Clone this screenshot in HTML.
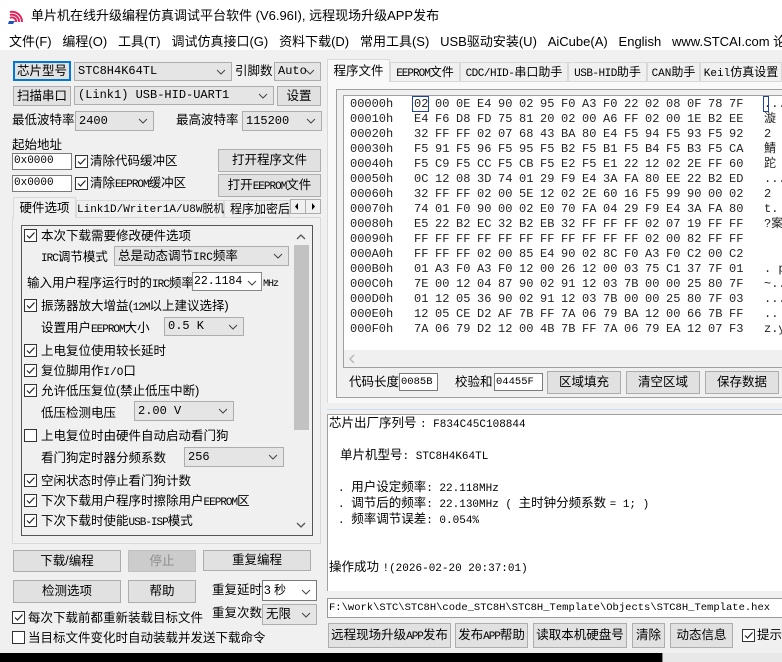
<!DOCTYPE html>
<html><head><meta charset="utf-8">
<style>
*{box-sizing:border-box;margin:0;padding:0}
body{width:782px;height:662px;overflow:hidden;background:#f0f0f0;position:relative;font-family:"Liberation Sans","Noto Sans CJK SC",sans-serif;font-size:12px;line-height:15px;color:#000}
.a{position:absolute;white-space:nowrap;line-height:15px}
.btn{position:absolute;background:#e1e1e1;border:1px solid #adadad;text-align:center;font-size:12.5px;white-space:nowrap}
.sel{position:absolute;background:#e5e5e5;border:1px solid #adadad;font-family:"Liberation Mono","Noto Sans CJK SC",monospace;font-size:12px;padding-left:3px;white-space:nowrap}
.sel svg{position:absolute;right:5px;top:50%;margin-top:-3px}
.inp{position:absolute;background:#fff;border:1px solid #7a7a7a;font-family:"Liberation Mono",monospace;font-size:11px;padding-left:1px;white-space:nowrap}
.cb{position:absolute;width:13px;height:13px;background:#fff;border:1px solid #333}
.m{font-family:"Liberation Mono","Noto Sans CJK SC",monospace}
.row{position:absolute;left:350px;font-family:"Liberation Mono","Noto Sans CJK SC",monospace;font-size:12px;line-height:15px;color:#222;white-space:nowrap}
.row span{position:absolute;top:0}
.tab{position:absolute;border:1px solid #d9d9d9;border-bottom:none;background:#f0f0f0;text-align:center;font-size:12px;white-space:nowrap}
</style></head><body>
<div class="a" style="left:0;top:0;width:782px;height:32px;background:#fff"></div>
<svg class="a" style="left:8px;top:8px" width="18" height="16" viewBox="0 0 18 16"><path d="M2 4 A10 10 0 0 1 14 14 M2 7 A7 7 0 0 1 11 14 M2 10 A4 4 0 0 1 8 14" stroke="#e0245e" stroke-width="2" fill="none"/><path d="M1 13 L7 13 L5 16 L0 16Z" fill="#2050c0"/></svg>
<div class="a" style="left:31px;top:8px;font-size:13px">单片机在线升级编程仿真调试平台软件 (V6.96I), 远程现场升级APP发布</div>
<div class="a" style="left:0;top:32px;width:782px;height:18px;background:#fff"></div>
<div class="a" style="left:9px;top:34px;font-size:13px">文件(F)&nbsp;&nbsp;&nbsp;编程(O)&nbsp;&nbsp;&nbsp;工具(T)&nbsp;&nbsp;&nbsp;调试仿真接口(G)&nbsp;&nbsp;&nbsp;资料下载(D)&nbsp;&nbsp;&nbsp;常用工具(S)&nbsp;&nbsp;&nbsp;USB驱动安装(U)&nbsp;&nbsp;&nbsp;AiCube(A)&nbsp;&nbsp;&nbsp;English&nbsp;&nbsp;&nbsp;www.STCAI.com 论坛</div>

<div class="btn" style="left:13px;top:61px;width:58px;height:20px;border:2px solid #0078d7;line-height:16px">芯片型号</div>
<div class="sel" style="left:74px;top:62px;width:158px;height:19px;line-height:17px">STC8H4K64TL<svg width="10" height="6"><path d="M1 1L5 5L9 1" stroke="#444" fill="none"/></svg></div>
<div class="a" style="left:235px;top:64px;font-size:12.5px">引脚数</div>
<div class="sel" style="left:274px;top:62px;width:47px;height:19px;line-height:17px">Auto<svg width="10" height="6"><path d="M1 1L5 5L9 1" stroke="#444" fill="none"/></svg></div>
<div class="btn" style="left:13px;top:86px;width:58px;height:20px;line-height:18px">扫描串口</div>
<div class="sel" style="left:74px;top:86px;width:200px;height:19px;line-height:17px">(Link1) USB-HID-UART1<svg width="10" height="6"><path d="M1 1L5 5L9 1" stroke="#444" fill="none"/></svg></div>
<div class="btn" style="left:277px;top:86px;width:44px;height:20px;line-height:18px">设置</div>
<div class="a" style="left:12px;top:113px;font-size:12.5px">最低波特率</div>
<div class="sel" style="left:75px;top:111px;width:79px;height:20px;line-height:18px">2400<svg width="10" height="6"><path d="M1 1L5 5L9 1" stroke="#444" fill="none"/></svg></div>
<div class="a" style="left:176px;top:113px;font-size:12.5px">最高波特率</div>
<div class="sel" style="left:242px;top:111px;width:80px;height:20px;line-height:18px">115200<svg width="10" height="6"><path d="M1 1L5 5L9 1" stroke="#444" fill="none"/></svg></div>
<div class="a" style="left:12px;top:138px;font-size:12.5px">起始地址</div>
<div class="inp" style="left:12px;top:153px;width:60px;height:17px;line-height:15px">0x0000</div>
<div class="cb" style="left:75px;top:155px"><svg width="11" height="11" style="position:absolute;left:0;top:0"><path d="M2 5.5L4.5 8L9.5 2.5" stroke="#222" stroke-width="1.2" fill="none"/></svg></div>
<div class="a" style="left:90px;top:154px;font-size:12.5px">清除代码缓冲区</div>
<div class="btn" style="left:218px;top:149px;width:103px;height:23px;line-height:21px">打开程序文件</div>
<div class="inp" style="left:12px;top:175px;width:60px;height:17px;line-height:15px">0x0000</div>
<div class="cb" style="left:75px;top:177px"><svg width="11" height="11" style="position:absolute;left:0;top:0"><path d="M2 5.5L4.5 8L9.5 2.5" stroke="#222" stroke-width="1.2" fill="none"/></svg></div>
<div class="a" style="left:90px;top:176px;font-size:12.5px">清除<span class="m" style="font-size:11px;letter-spacing:-1px">EEPROM</span>缓冲区</div>
<div class="btn" style="left:218px;top:174px;width:103px;height:23px;line-height:21px">打开<span class="m" style="font-size:11px;letter-spacing:-1px">EEPROM</span>文件</div>
<div class="a" style="left:12px;top:217px;width:309px;height:327px;border:1px solid #d9d9d9;background:#f0f0f0"></div>
<div class="tab" style="left:13px;top:197px;width:63px;height:21px;line-height:20px;font-size:12.5px">硬件选项</div>
<div class="tab" style="left:76px;top:200px;width:148px;height:17px;line-height:16px;font-size:11px"><span class="m">Link1D/Writer1A/U8W</span>脱机</div>
<div class="tab" style="left:224px;top:200px;width:66px;height:17px;line-height:16px;overflow:hidden;text-align:left;padding-left:5px">程序加密后</div>
<div class="a" style="left:290px;top:199px;width:31px;height:15px;border:1px solid #adadad;background:#f0f0f0"><svg width="29" height="13" style="position:absolute;left:0;top:0"><path d="M7 3L4 6.5L7 10Z M21 3L24 6.5L21 10Z" fill="#000"/><path d="M14.5 0V13" stroke="#adadad"/></svg></div>
<div class="a" style="left:21px;top:225px;width:292px;height:311px;border:1px solid #555;background:#f0f0f0"></div>
<div class="a" style="left:294px;top:245px;width:15px;height:185px;background:#c2c2c2"></div>
<svg class="a" style="left:296px;top:234px" width="10" height="6"><path d="M1 5L5 1L9 5" stroke="#555" stroke-width="1.3" fill="none"/></svg>
<svg class="a" style="left:296px;top:522px" width="10" height="6"><path d="M1 1L5 5L9 1" stroke="#555" stroke-width="1.3" fill="none"/></svg>

<div id="hw"></div>
<div class="a" style="left:41px;top:229px;font-size:12.5px">本次下载需要修改硬件选项</div>
<div class="a" style="left:41px;top:250px;font-size:12.5px"><span class="m" style="font-size:11px;letter-spacing:-1px">IRC</span>调节模式</div>
<div class="sel" style="left:114px;top:246px;width:175px;height:20px;line-height:18px;font-family:'Liberation Sans','Noto Sans CJK SC',sans-serif;font-size:12.5px">总是动态调节<span class="m" style="font-size:11px">IRC</span>频率<svg width="10" height="6"><path d="M1 1L5 5L9 1" stroke="#444" fill="none"/></svg></div>
<div class="a" style="left:27px;top:276px;font-size:12.5px">输入用户程序运行时的<span class="m" style="font-size:11px;letter-spacing:-1px">IRC</span>频率</div>
<div class="inp" style="left:192px;top:272px;width:70px;height:19px;line-height:17px;font-size:11.5px;border-color:#888">22.1184<svg width="10" height="6" style="position:absolute;right:4px;top:7px"><path d="M1 1L5 5L9 1" stroke="#444" fill="none"/></svg></div>
<div class="a m" style="left:263px;top:277px;font-size:10px;letter-spacing:-1px">MHz</div>
<div class="a" style="left:41px;top:299px;font-size:12.5px">振荡器放大增益(<span class="m" style="font-size:11px;letter-spacing:-1px">12M</span>以上建议选择)</div>
<div class="a" style="left:41px;top:321px;font-size:12.5px">设置用户<span class="m" style="font-size:11px;letter-spacing:-1px">EEPROM</span>大小</div>
<div class="sel" style="left:164px;top:317px;width:80px;height:19px;line-height:17px">0.5 K<svg width="10" height="6"><path d="M1 1L5 5L9 1" stroke="#444" fill="none"/></svg></div>
<div class="a" style="left:41px;top:344px;font-size:12.5px">上电复位使用较长延时</div>
<div class="a" style="left:41px;top:364px;font-size:12.5px">复位脚用作<span class="m" style="font-size:11px">I/O</span>口</div>
<div class="a" style="left:41px;top:384px;font-size:12.5px">允许低压复位(禁止低压中断)</div>
<div class="a" style="left:41px;top:406px;font-size:12.5px">低压检测电压</div>
<div class="sel" style="left:134px;top:401px;width:100px;height:20px;line-height:18px">2.00 V<svg width="10" height="6"><path d="M1 1L5 5L9 1" stroke="#444" fill="none"/></svg></div>
<div class="a" style="left:41px;top:429px;font-size:12.5px">上电复位时由硬件自动启动看门狗</div>
<div class="a" style="left:41px;top:451px;font-size:12.5px">看门狗定时器分频系数</div>
<div class="sel" style="left:184px;top:447px;width:100px;height:20px;line-height:18px">256<svg width="10" height="6"><path d="M1 1L5 5L9 1" stroke="#444" fill="none"/></svg></div>
<div class="a" style="left:41px;top:474px;font-size:12.5px">空闲状态时停止看门狗计数</div>
<div class="a" style="left:41px;top:494px;font-size:12.5px">下次下载用户程序时擦除用户<span class="m" style="font-size:11px;letter-spacing:-1px">EEPROM</span>区</div>
<div class="a" style="left:41px;top:514px;font-size:12.5px">下次下载时使能<span class="m" style="font-size:11px;letter-spacing:-1px">USB-ISP</span>模式</div>

<div class="btn" style="left:13px;top:550px;width:108px;height:22px;line-height:20px">下载/编程</div>
<div class="btn" style="left:128px;top:550px;width:68px;height:22px;line-height:20px;background:#cccccc;border-color:#bfbfbf;color:#8d8d8d">停止</div>
<div class="btn" style="left:203px;top:550px;width:108px;height:21px;line-height:19px">重复编程</div>
<div class="btn" style="left:13px;top:580px;width:108px;height:23px;line-height:21px">检测选项</div>
<div class="btn" style="left:128px;top:580px;width:68px;height:23px;line-height:21px">帮助</div>
<div class="a" style="left:212px;top:583px;font-size:12.5px">重复延时</div>
<div class="inp" style="left:262px;top:580px;width:55px;height:21px;line-height:19px;font-size:12px;font-family:'Liberation Sans','Noto Sans CJK SC',sans-serif">3 秒<svg width="10" height="6" style="position:absolute;right:5px;top:8px"><path d="M1 1L5 5L9 1" stroke="#444" fill="none"/></svg></div>
<div class="a" style="left:212px;top:606px;font-size:12.5px">重复次数</div>
<div class="sel" style="left:262px;top:604px;width:55px;height:21px;line-height:19px;font-family:'Liberation Sans','Noto Sans CJK SC',sans-serif;font-size:12.5px">无限<svg width="10" height="6"><path d="M1 1L5 5L9 1" stroke="#444" fill="none"/></svg></div>
<div class="a" style="left:28px;top:611px;font-size:12.5px">每次下载前都重新装载目标文件</div>
<div class="a" style="left:28px;top:631px;font-size:12.5px">当目标文件变化时自动装载并发送下载命令</div>

<div class="a" style="left:327px;top:81px;width:455px;height:322px;border-top:1px solid #d9d9d9;border-left:1px solid #d9d9d9;background:#f9f9f9"></div>
<div class="tab" style="left:327px;top:59px;width:63px;height:23px;line-height:22px;background:#f9f9f9;font-size:12.5px">程序文件</div>
<div class="tab" style="left:390px;top:62px;width:70px;height:19px;line-height:18px"><span class="m" style="font-size:11px;letter-spacing:-1px">EEPROM</span>文件</div>
<div class="tab" style="left:460px;top:62px;width:108px;height:19px;line-height:18px"><span class="m" style="font-size:11px;letter-spacing:-0.5px">CDC/HID-</span>串口助手</div>
<div class="tab" style="left:568px;top:62px;width:79px;height:19px;line-height:18px"><span class="m" style="font-size:11px;letter-spacing:-0.5px">USB-HID</span>助手</div>
<div class="tab" style="left:647px;top:62px;width:53px;height:19px;line-height:18px"><span class="m" style="font-size:11px">CAN</span>助手</div>
<div class="tab" style="left:700px;top:62px;width:82px;height:19px;line-height:18px"><span class="m" style="font-size:11px">Keil</span>仿真设置</div>
<div class="a" style="left:336px;top:89px;width:446px;height:309px;border:1px solid #a0a0a0;border-right:none;background:#f0f0f0"></div>
<div class="a" style="left:343px;top:95px;width:439px;height:273px;border:1px solid #a0a0a0;border-right:none;background:#fff"></div>
<div class="a" style="left:344px;top:350px;width:438px;height:17px;background:#f0f0f0"></div>
<svg class="a" style="left:348px;top:354px" width="8" height="10"><path d="M6 1L2 5L6 9" stroke="#bbb" stroke-width="1.5" fill="none"/></svg>
<div id="hex"></div>
<div class="a" style="left:412px;top:96px;width:17px;height:16px;border:1px solid #2040a0"></div>
<div class="a" style="left:763px;top:96px;width:6px;height:16px;border:1px solid #2040a0"></div>
<div class="a" style="left:349px;top:375px;font-size:12.5px">代码长度</div>
<div class="inp" style="left:399px;top:373px;width:39px;height:18px;line-height:16px;font-size:10.5px">0085B</div>
<div class="a" style="left:455px;top:375px;font-size:12.5px">校验和</div>
<div class="inp" style="left:494px;top:373px;width:49px;height:18px;line-height:16px;font-size:10.5px">04455F</div>
<div class="btn" style="left:547px;top:371px;width:74px;height:23px;line-height:21px">区域填充</div>
<div class="btn" style="left:626px;top:371px;width:74px;height:23px;line-height:21px">清空区域</div>
<div class="btn" style="left:705px;top:371px;width:74px;height:23px;line-height:21px">保存数据</div>
<div class="a" style="left:327px;top:409px;width:455px;height:1px;background:#cde"></div>
<div class="a" style="left:327px;top:414px;width:455px;height:177px;border-left:1px solid #a0a0a0;border-top:1px solid #a0a0a0;background:#fff"></div>
<div class="a" style="left:329px;top:416px;font-size:12.5px">芯片出厂序列号 <span class="m" style="font-size:11px">: F834C45C108844</span></div>
<div class="a" style="left:340px;top:448px;font-size:12.5px">单片机型号<span class="m" style="font-size:11px">: STC8H4K64TL</span></div>
<div class="a" style="left:338px;top:480px;font-size:12.5px"><span class="m" style="font-size:11px">. </span>用户设定频率<span class="m" style="font-size:11px">: 22.118MHz</span></div>
<div class="a" style="left:338px;top:496px;font-size:12.5px"><span class="m" style="font-size:11px">. </span>调节后的频率<span class="m" style="font-size:11px">: 22.130MHz ( </span>主时钟分频系数 <span class="m" style="font-size:11px">= 1; )</span></div>
<div class="a" style="left:338px;top:512px;font-size:12.5px"><span class="m" style="font-size:11px">. </span>频率调节误差<span class="m" style="font-size:11px">: 0.054%</span></div>
<div class="a" style="left:329px;top:560px;font-size:12.5px">操作成功 <span class="m" style="font-size:11px">!(2026-02-20 20:37:01)</span></div>
<div class="inp" style="left:327px;top:598px;width:455px;height:20px;line-height:18px;font-size:10.5px;border-color:#999;border-right:none">F:\work\STC\STC8H\code_STC8H\STC8H_Template\Objects\STC8H_Template.hex</div>
<div class="btn" style="left:328px;top:623px;width:123px;height:25px;line-height:23px">远程现场升级<span class="m" style="font-size:11px;letter-spacing:-1px">APP</span>发布</div>
<div class="btn" style="left:455px;top:623px;width:73px;height:25px;line-height:23px">发布<span class="m" style="font-size:11px;letter-spacing:-1px">APP</span>帮助</div>
<div class="btn" style="left:533px;top:623px;width:94px;height:25px;line-height:23px">读取本机硬盘号</div>
<div class="btn" style="left:632px;top:623px;width:33px;height:25px;line-height:23px">清除</div>
<div class="btn" style="left:670px;top:623px;width:63px;height:25px;line-height:23px">动态信息</div>
<div class="cb" style="left:742px;top:629px"><svg width="11" height="11" style="position:absolute;left:0;top:0"><path d="M2 5.5L4.5 8L9.5 2.5" stroke="#222" stroke-width="1.2" fill="none"/></svg></div>
<div class="a" style="left:757px;top:628px;font-size:12.5px">提示</div>
<div class="a" style="left:0;top:653px;width:782px;height:9px;background:#000"></div>
<div class="a" style="left:662px;top:653px;width:120px;height:9px;background:#e8e8e8;border-left:1px solid #888"></div>

<script>
var hw=[[229,1],[299,1],[344,1],[364,1],[384,1],[429,0],[474,1],[494,1],[514,1],[611,1,12],[631,0,12]];
var s='';
hw.forEach(function(h){var x=h[2]!==undefined?h[2]:24;s+='<div class="cb" style="left:'+x+'px;top:'+h[0]+'px">'+(h[1]?'<svg width="11" height="11" style="position:absolute;left:0;top:0"><path d="M2 5.5L4.5 8L9.5 2.5" stroke="#222" stroke-width="1.2" fill="none"/></svg>':'')+'</div>';});
document.getElementById('hw').outerHTML=s;
var rows=[
"02 00 0E E4 90 02 95 F0 A3 F0 22 02 08 0F 78 7F|...",
"E4 F6 D8 FD 75 81 20 02 00 A6 FF 02 00 1E B2 EE|漩",
"32 FF FF 02 07 68 43 BA 80 E4 F5 94 F5 93 F5 92|2",
"F5 91 F5 96 F5 95 F5 B2 F5 B1 F5 B4 F5 B3 F5 CA|鯖",
"F5 C9 F5 CC F5 CB F5 E2 F5 E1 22 12 02 2E FF 60|跎",
"0C 12 08 3D 74 01 29 F9 E4 3A FA 80 EE 22 B2 ED|...",
"32 FF FF 02 00 5E 12 02 2E 60 16 F5 99 90 00 02|2",
"74 01 F0 90 00 02 E0 70 FA 04 29 F9 E4 3A FA 80|t.",
"E5 22 B2 EC 32 B2 EB 32 FF FF FF 02 07 19 FF FF|?案",
"FF FF FF FF FF FF FF FF FF FF FF 02 00 82 FF FF|",
"FF FF FF 02 00 85 E4 90 02 8C F0 A3 F0 C2 00 C2|",
"01 A3 F0 A3 F0 12 00 26 12 00 03 75 C1 37 7F 01|. p",
"7E 00 12 04 87 90 02 91 12 03 7B 00 00 25 80 7F|~..",
"01 12 05 36 90 02 91 12 03 7B 00 00 25 80 7F 03|...",
"12 05 CE D2 AF 7B FF 7A 06 79 BA 12 00 66 7B FF|..",
"7A 06 79 D2 12 00 4B 7B FF 7A 06 79 EA 12 07 F3|z.y"];
var h='';
rows.forEach(function(r,i){var p=r.split('|');var b=p[0].split(' ');
var addr=('0000'+(i*16).toString(16).toUpperCase()).slice(-4);
h+='<div class="row" style="top:'+(97+i*15)+'px"><span style="left:0">0'+addr+'h</span>';
b.forEach(function(x,j){h+='<span style="left:'+(64+j*21)+'px">'+x+'</span>';});
h+='<span style="left:414px">'+p[1]+'</span></div>';});
document.getElementById('hex').outerHTML=h;
</script>
</body></html>
